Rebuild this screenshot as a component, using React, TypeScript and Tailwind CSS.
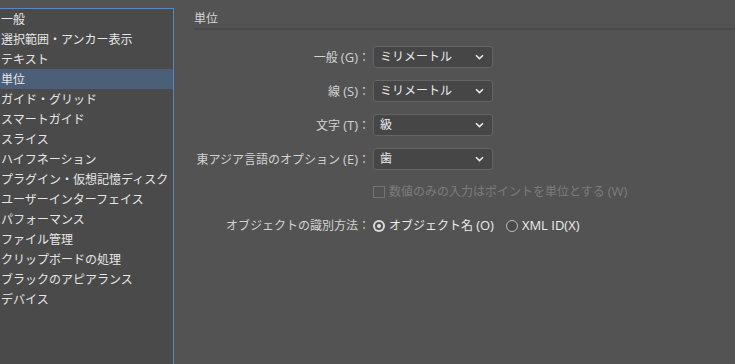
import React from 'react';

const FONT = '"Open Sans", "Noto Sans CJK JP", sans-serif';

const categories = [
  '一般',
  '選択範囲・アンカー表示',
  'テキスト',
  '単位',
  'ガイド・グリッド',
  'スマートガイド',
  'スライス',
  'ハイフネーション',
  'プラグイン・仮想記憶ディスク',
  'ユーザーインターフェイス',
  'パフォーマンス',
  'ファイル管理',
  'クリップボードの処理',
  'ブラックのアピアランス',
  'デバイス',
];

// Latin bits render a touch larger than the CJK text in the original UI
const L = ({ children }: { children: React.ReactNode }) => <span className="text-[13px]">{children}</span>;

const Chevron = () => (
  <svg width="9" height="6" viewBox="0 0 9 6" fill="none">
    <path d="M1 1.2 L4.5 4.6 L8 1.2" stroke="#e8e8e8" strokeWidth="1.6" />
  </svg>
);

const SelectRow = ({ label, keyHint, value }: { label: string; keyHint: string; value: string }) => (
  <div className="flex items-center h-[22px]">
    <div className="w-[199px] text-right pr-[3px] text-[#d2d2d2] whitespace-nowrap">
      {label} <L>({keyHint})</L>：
    </div>
    <div className="w-[120px] h-[22px] flex items-center justify-between pl-[6px] pr-[8px] bg-[#464646] border border-[#646464] rounded-[3px] text-[#ececec]">
      <span>{value}</span>
      <Chevron />
    </div>
  </div>
);

const Radio = ({ checked }: { checked?: boolean }) =>
  checked ? (
    <span className="shrink-0 w-[12px] h-[12px] rounded-full bg-[#d8d8d8] flex items-center justify-center">
      <span className="w-[8px] h-[8px] rounded-full bg-[#505050] flex items-center justify-center">
        <span className="w-[4px] h-[4px] rounded-full bg-[#e0e0e0]" />
      </span>
    </span>
  ) : (
    <span className="shrink-0 block w-[12px] h-[12px] rounded-full border border-[#bdbdbd] bg-[#4a4a4a]" />
  );

export default function App() {
  return (
    <div
      className="w-[735px] h-[364px] bg-[#535353] flex text-[12px] leading-none overflow-hidden"
      style={{ fontFamily: FONT }}
    >
      {/* category list */}
      <div className="pt-[8px] flex flex-col">
        <div className="w-[174px] flex-1 bg-[#4a4a4a] border-t border-r border-[#5b87bd] pl-[1px]">
          {categories.map((c) => (
            <div
              key={c}
              className={`h-[20px] pt-[1px] flex items-center whitespace-nowrap text-[#e6e6e6] ${
                c === '単位' ? 'bg-[#4b6078] -ml-[1px] pl-[1px]' : ''
              }`}
            >
              {c}
            </div>
          ))}
        </div>
      </div>

      {/* settings */}
      <div className="flex-1 flex flex-col">
        <div className="ml-[20px] h-[30px] pt-[13px] text-[#d6d6d6] border-b-2 border-[#4a4a4a]">単位</div>
        <div className="flex flex-col gap-[12px] mt-[16px]">
          <SelectRow label="一般" keyHint="G" value="ミリメートル" />
          <SelectRow label="線" keyHint="S" value="ミリメートル" />
          <SelectRow label="文字" keyHint="T" value="級" />
          <SelectRow label="東アジア言語のオプション" keyHint="E" value="歯" />
        </div>
        <div className="flex items-center mt-[15px] ml-[199px] gap-[4px] text-[#7c7c7c]">
          <span className="block shrink-0 w-[12px] h-[12px] border border-[#747474]" />
          <span>
            数値のみの入力はポイントを単位とする <L>(W)</L>
          </span>
        </div>
        <div className="flex items-center mt-[21px]">
          <div className="w-[199px] text-right pr-[3px] text-[#d2d2d2]">オブジェクトの識別方法：</div>
          <Radio checked />
          <span className="ml-[4px] text-[#ececec]">
            オブジェクト名 <L>(O)</L>
          </span>
          <span className="ml-[12px]">
            <Radio />
          </span>
          <span className="ml-[4px] text-[#ececec]">
            <L>XML ID(X)</L>
          </span>
        </div>
      </div>
    </div>
  );
}
